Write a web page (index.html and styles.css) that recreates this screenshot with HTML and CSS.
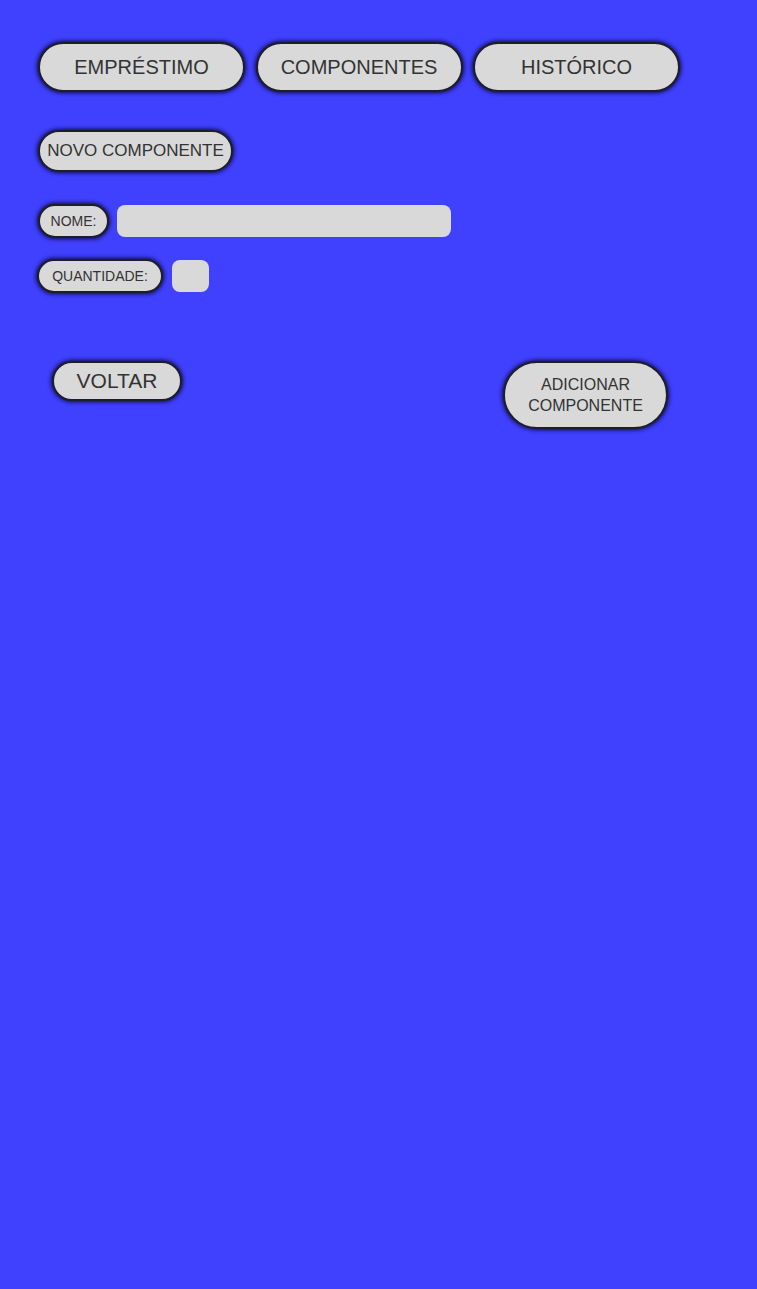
FILE: index.html
```html
<!DOCTYPE html>
<html lang="pt">
<head>
<meta charset="utf-8">
<link rel="stylesheet" href="styles.css">
</head>
<body>
<div class="page">
  <nav class="tabs">
    <button class="pill tab">EMPRÉSTIMO</button>
    <button class="pill tab">COMPONENTES</button>
    <button class="pill tab">HISTÓRICO</button>
  </nav>
  <div class="title-row">
    <span class="pill title">NOVO COMPONENTE</span>
  </div>
  <div class="field field-nome">
    <span class="pill label label-nome">NOME:</span>
    <span class="input input-nome"></span>
  </div>
  <div class="field field-qtd">
    <span class="pill label label-qtd">QUANTIDADE:</span>
    <span class="input input-qtd"></span>
  </div>
  <div class="actions">
    <button class="pill back">VOLTAR</button>
    <button class="pill add">ADICIONAR<br>COMPONENTE</button>
  </div>
</div>
</body>
</html>
```
FILE: styles.css
```css
html, body {
  margin: 0;
  padding: 0;
  background: #4040ff;
  height: 100%;
}
body {
  font-family: "Liberation Sans", Arial, sans-serif;
  color: #333;
}
.page {
  padding: 42px 0 0 38px;
}
.pill {
  box-sizing: border-box;
  display: flex;
  align-items: center;
  justify-content: center;
  background: #d9d9d9;
  border: 2px solid #1e1e2a;
  border-radius: 999px;
  box-shadow: 0 0 4px 1px #0c0c40;
  color: #333;
  font-family: "Liberation Sans", Arial, sans-serif;
  padding: 0;
  margin: 0;
}
.tabs {
  display: flex;
  gap: 10.5px;
}
.tab {
  width: 207px;
  height: 50px;
  font-size: 20px;
}
.title-row {
  display: flex;
  margin-top: 38px;
}
.title {
  width: 195px;
  height: 42px;
  font-size: 17px;
}
.field {
  display: flex;
  align-items: center;
}
.field-nome {
  margin-top: 32px;
}
.field-qtd {
  margin-top: 21px;
  margin-left: -1px;
}
.label {
  height: 34px;
  font-size: 14px;
}
.label-nome { width: 71px; }
.label-qtd { width: 126px; }
.input {
  display: block;
  background: #d9d9d9;
  border-radius: 8px;
  height: 32px;
}
.input-nome {
  width: 334px;
  margin-left: 8px;
}
.input-qtd {
  width: 37px;
  margin-left: 9px;
}
.actions {
  display: flex;
  align-items: flex-start;
  margin-top: 68px;
  padding-left: 14px;
}
.back {
  width: 130px;
  height: 40px;
  font-size: 21px;
}
.add {
  width: 165px;
  height: 68px;
  font-size: 16px;
  line-height: 21px;
  margin-left: 321px;
  text-align: center;
}
```
